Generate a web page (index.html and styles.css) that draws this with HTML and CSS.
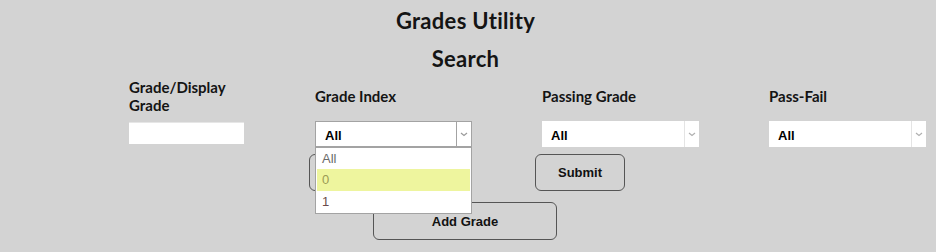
FILE: index.html
```html
<!DOCTYPE html>
<html>
<head>
<meta charset="utf-8">
<link rel="stylesheet" href="styles.css">
</head>
<body>
<h1 class="title">Grades Utility</h1>
<h2 class="subtitle">Search</h2>
<div class="form-grid">
  <div class="label">Grade/Display<br>Grade</div>
  <div class="label">Grade Index</div>
  <div class="label">Passing Grade</div>
  <div class="label">Pass-Fail</div>

  <div class="cell"><div class="text-input"></div></div>
  <div class="cell">
    <div class="select bordered">
      <span class="select-value">All</span>
      <span class="select-arrow"><svg width="8" height="5" viewBox="0 0 8 5"><polyline points="1,1 4,3.5 7,1" fill="none" stroke="#9a9a9a" stroke-width="1.2"/></svg></span>
      <div class="dropdown">
        <div class="option">All</div>
        <div class="option active">0</div>
        <div class="option one">1</div>
      </div>
    </div>
  </div>
  <div class="cell">
    <div class="select">
      <span class="select-value">All</span>
      <span class="select-arrow light"><svg width="8" height="5" viewBox="0 0 8 5"><polyline points="1,1 4,3.5 7,1" fill="none" stroke="#b0b0b0" stroke-width="1.2"/></svg></span>
    </div>
  </div>
  <div class="cell">
    <div class="select">
      <span class="select-value">All</span>
      <span class="select-arrow light"><svg width="8" height="5" viewBox="0 0 8 5"><polyline points="1,1 4,3.5 7,1" fill="none" stroke="#b0b0b0" stroke-width="1.2"/></svg></span>
    </div>
  </div>
</div>
<div class="button-row">
  <button class="btn">Clear</button>
  <button class="btn">Submit</button>
</div>
<div class="add-row">
  <button class="btn wide">Add Grade</button>
</div>
</body>
</html>
```
FILE: styles.css
```css
html, body {
  margin: 0;
  padding: 0;
}
body {
  background: #d3d3d3;
  font-family: Lato, "Noto Sans", sans-serif;
  color: #141414;
  width: 936px;
  height: 252px;
  overflow: hidden;
}
.title, .subtitle {
  text-align: center;
  font-size: 22px;
  line-height: 24px;
  font-weight: 700;
  margin: 0;
  letter-spacing: 0.3px;
  padding-right: 5px;
}
.title {
  padding-top: 9px;
}
.subtitle {
  margin-top: 14px;
}
.form-grid {
  display: grid;
  grid-template-columns: 186px 227px 227px 167px;
  grid-template-rows: 36px 26px;
  row-gap: 7px;
  padding-left: 129px;
  margin-top: 7px;
}
.label {
  font-size: 15px;
  line-height: 18px;
  font-weight: 700;
  align-self: center;
}
.cell {
  position: relative;
}
.text-input {
  margin-top: 1px;
  width: 115px;
  height: 22px;
  background: #fff;
  border-top: 1px solid #e6e6e6;
  box-sizing: border-box;
}
.select {
  position: relative;
  width: 157px;
  height: 26px;
  background: #fff;
  box-sizing: border-box;
  display: flex;
  align-items: center;
  font-family: "Liberation Sans", Arial, sans-serif;
}
.select.bordered {
  border: 1px solid #a3a3a3;
}
.select-value {
  flex: 1;
  padding-left: 9px;
  font-size: 13px;
  font-weight: 700;
  color: #000;
  padding-top: 2px;
}
.select-arrow {
  width: 14px;
  height: 100%;
  border-left: 1px solid #a3a3a3;
  display: flex;
  align-items: center;
  justify-content: center;
}
.select-arrow.light {
  border-left: 1px solid #e4e4e4;
}
.dropdown {
  position: absolute;
  left: -1px;
  top: 25px;
  width: 157px;
  background: #fff;
  border: 1px solid #a3a3a3;
  box-sizing: border-box;
  z-index: 5;
  padding-bottom: 1px;
}
.option {
  height: 21px;
  line-height: 21px;
  padding-left: 6px;
  font-size: 13px;
  color: #6a6a6a;
}
.option.active {
  background: #eef59e;
  color: #9a9a55;
  height: 22px;
  line-height: 22px;
  margin: 0 1px;
  padding-left: 5px;
}
.option.one {
  color: #6b4b4b;
}
.button-row {
  display: flex;
  justify-content: center;
  gap: 136px;
  margin-top: 7px;
  padding-right: 2px;
}
.btn {
  width: 90px;
  height: 37px;
  background: #d3d3d3;
  border: 1px solid #555;
  border-radius: 6px;
  font-family: "Liberation Sans", Arial, sans-serif;
  font-weight: 700;
  font-size: 13px;
  color: #111;
  padding: 0;
}
.add-row {
  display: flex;
  justify-content: center;
  margin-top: 11px;
}
.btn.wide {
  width: 184px;
  height: 38px;
  margin-right: 6px;
}
```
